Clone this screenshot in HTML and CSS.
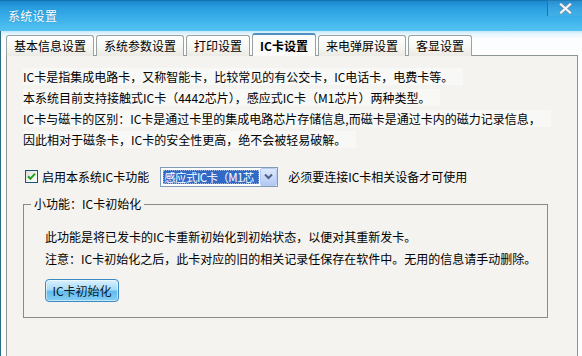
FILE: index.html
```html
<!DOCTYPE html>
<html>
<head>
<meta charset="utf-8">
<link rel="stylesheet" href="styles.css">
</head>
<body>
<div class="window">
  <div class="titlebar">
    <span class="title">系统设置</span>
    <div class="close">
      <svg width="13" height="11" viewBox="0 0 13 11">
        <path d="M2 1.5 L11 9.5 M11 1.5 L2 9.5" stroke="#6e8ea6" stroke-width="3.6" stroke-linecap="square" fill="none"/>
        <path d="M2 1.5 L11 9.5 M11 1.5 L2 9.5" stroke="#f4f7fa" stroke-width="2.2" stroke-linecap="square" fill="none"/>
      </svg>
    </div>
  </div>
  <div class="frame">
    <div class="tabs">
      <div class="tab">基本信息设置</div>
      <div class="tab">系统参数设置</div>
      <div class="tab">打印设置</div>
      <div class="tab active">IC卡设置</div>
      <div class="tab">来电弹屏设置</div>
      <div class="tab">客显设置</div>
    </div>
    <div class="panel">
      <div class="intro">
        <div class="line"><span>IC卡是指集成电路卡，又称智能卡，比较常见的有公交卡，IC电话卡，电费卡等。</span></div>
        <div class="line"><span>本系统目前支持接触式IC卡（4442芯片），感应式IC卡（M1芯片）两种类型。</span></div>
        <div class="line"><span>IC卡与磁卡的区别：IC卡是通过卡里的集成电路芯片存储信息,而磁卡是通过卡内的磁力记录信息，</span></div>
        <div class="line"><span>因此相对于磁条卡，IC卡的安全性更高，绝不会被轻易破解。</span></div>
      </div>
      <div class="enable-row">
        <span class="checkbox">
          <svg width="9" height="9" viewBox="0 0 9 9"><path d="M1 4.2 L3.4 6.8 L8 1.6" stroke="#21a121" stroke-width="2" fill="none"/></svg>
        </span>
        <span class="enable-label">启用本系统IC卡功能</span>
        <div class="select">
          <span class="select-value"><span class="select-text">感应式IC卡（M1芯</span></span>
          <span class="select-btn">
            <svg width="9" height="7" viewBox="0 0 9 7"><path d="M1 1.5 L4.5 5 L8 1.5" stroke="#4d6185" stroke-width="2" fill="none"/></svg>
          </span>
        </div>
        <span class="hint">必须要连接IC卡相关设备才可使用</span>
      </div>
      <fieldset class="group">
        <legend>小功能：IC卡初始化</legend>
        <div class="group-body">
          <div class="gline">此功能是将已发卡的IC卡重新初始化到初始状态，以便对其重新发卡。</div>
          <div class="gline">注意：IC卡初始化之后，此卡对应的旧的相关记录任保存在软件中。无用的信息请手动删除。</div>
          <button class="btn">IC卡初始化</button>
        </div>
      </fieldset>
    </div>
  </div>
</div>
</body>
</html>
```
FILE: styles.css
```css
html, body {
  margin: 0;
  padding: 0;
}
body {
  width: 582px;
  height: 356px;
  overflow: hidden;
  font-family: "Noto Sans CJK SC", "Liberation Sans", sans-serif;
  font-size: 12px;
  color: #000;
  background: #fff;
}
.window {
  height: 356px;
  display: flex;
  flex-direction: column;
}
.titlebar {
  height: 31px;
  flex: none;
  display: flex;
  align-items: flex-start;
  background: linear-gradient(to bottom, #0d5f98 0px, #1a88cd 1px, #2a9fe0 8px, #3db2ea 20px, #56c3f1 31px);
}
.title {
  color: #fff;
  font-size: 12px;
  line-height: 31px;
  padding-left: 8px;
  letter-spacing: 0.3px;
  text-shadow: 0 0 1px rgba(0, 60, 110, 0.4);
}
.close {
  margin-left: auto;
  width: 35px;
  height: 16px;
  border-left: 1px solid #1676b6;
  background: rgba(255, 255, 255, 0.06);
  display: flex;
  align-items: flex-start;
  justify-content: center;
  padding-top: 3px;
  box-sizing: border-box;
}
.frame {
  flex: 1;
  display: flex;
  flex-direction: column;
  border-left: 1px solid #2b6d84;
  padding: 2px 4px 0 5px;
  background: linear-gradient(to bottom, #c6e8f8 0px, #e6f5fc 3px, #fbfdfe 8px, #fdfdfd 25px);
}
.tabs {
  display: flex;
  align-items: flex-end;
  gap: 2px;
  height: 23px;
  margin-bottom: -1px;
  position: relative;
  z-index: 1;
}
.tab {
  height: 21px;
  box-sizing: border-box;
  padding: 0 7px;
  line-height: 20px;
  border: 1px solid #9aa2a4;
  border-bottom: none;
  border-radius: 3px 3px 0 0;
  background: linear-gradient(to bottom, #ffffff 0%, #f7f7f3 50%, #ebeae4 100%);
  white-space: nowrap;
}
.tab.active {
  height: 23px;
  line-height: 22px;
  font-weight: bold;
  border-top: 2px solid #4f8fc6;
  background: #fbfbfa;
  padding: 0 7px;
}
.panel {
  flex: 1;
  border: 1px solid #8d9597;
  border-bottom: none;
  background: #f4f3ef;
  padding: 10px 16px 0 16px;
}
.intro .line {
  line-height: 21px;
  height: 21px;
  white-space: nowrap;
}
.intro .line span {
  background: #f8f8f7;
  padding-right: 10px;
}
.enable-row {
  display: flex;
  align-items: center;
  height: 21px;
  margin-top: 16px;
}
.checkbox {
  width: 13px;
  height: 13px;
  box-sizing: border-box;
  border: 1px solid #1c5180;
  background: linear-gradient(135deg, #dcdcd6 0%, #f6f6f4 60%, #ffffff 100%);
  display: flex;
  align-items: center;
  justify-content: center;
  margin-left: 2px;
}
.enable-label {
  margin-left: 4px;
}
.select {
  margin-left: 11px;
  width: 118px;
  height: 20px;
  box-sizing: border-box;
  border: 1px solid #7f9db9;
  background: #fff;
  display: flex;
  align-items: stretch;
}
.select-value {
  flex: 1;
  padding: 2px 1px 2px 2px;
  display: flex;
  min-width: 0;
}
.select-text {
  flex: 1;
  background: #3169c6;
  color: #fff;
  outline: 1px dotted #9bb3e0;
  outline-offset: -1px;
  line-height: 14px;
  white-space: nowrap;
  letter-spacing: -0.6px;
  font-size: 11.5px;
  padding-left: 1px;
}
.select-btn {
  width: 17px;
  box-sizing: border-box;
  border: 1px solid #b6cbf2;
  border-radius: 2px;
  background: linear-gradient(to bottom, #dde8fc 0%, #c5d6f8 60%, #b3c8f3 100%);
  display: flex;
  align-items: center;
  justify-content: center;
}
.hint {
  margin-left: 10px;
}
.group {
  margin: 9px 0 0 0;
  width: 525px;
  box-sizing: border-box;
  border: 1px solid #8a8a8a;
  padding: 0;
  min-width: 0;
}
.group legend {
  margin-left: 7px;
  padding: 0 3px;
  line-height: 16px;
}
.group-body {
  padding: 14px 0 15px 21px;
}
.gline {
  line-height: 22px;
  height: 22px;
  white-space: nowrap;
}
.btn {
  display: block;
  margin-top: 9px;
  width: 74px;
  height: 23px;
  padding: 0;
  font-family: "Noto Sans CJK SC", "Liberation Sans", sans-serif;
  font-size: 12px;
  color: #0a1a2a;
  border: 1px solid #3b8ac4;
  border-radius: 4px;
  background: linear-gradient(to bottom, #d9f1fd 0%, #a9dcf7 45%, #62bcee 55%, #86cff4 100%);
  box-shadow: inset 0 0 0 1px rgba(255, 255, 255, 0.5);
}
```
